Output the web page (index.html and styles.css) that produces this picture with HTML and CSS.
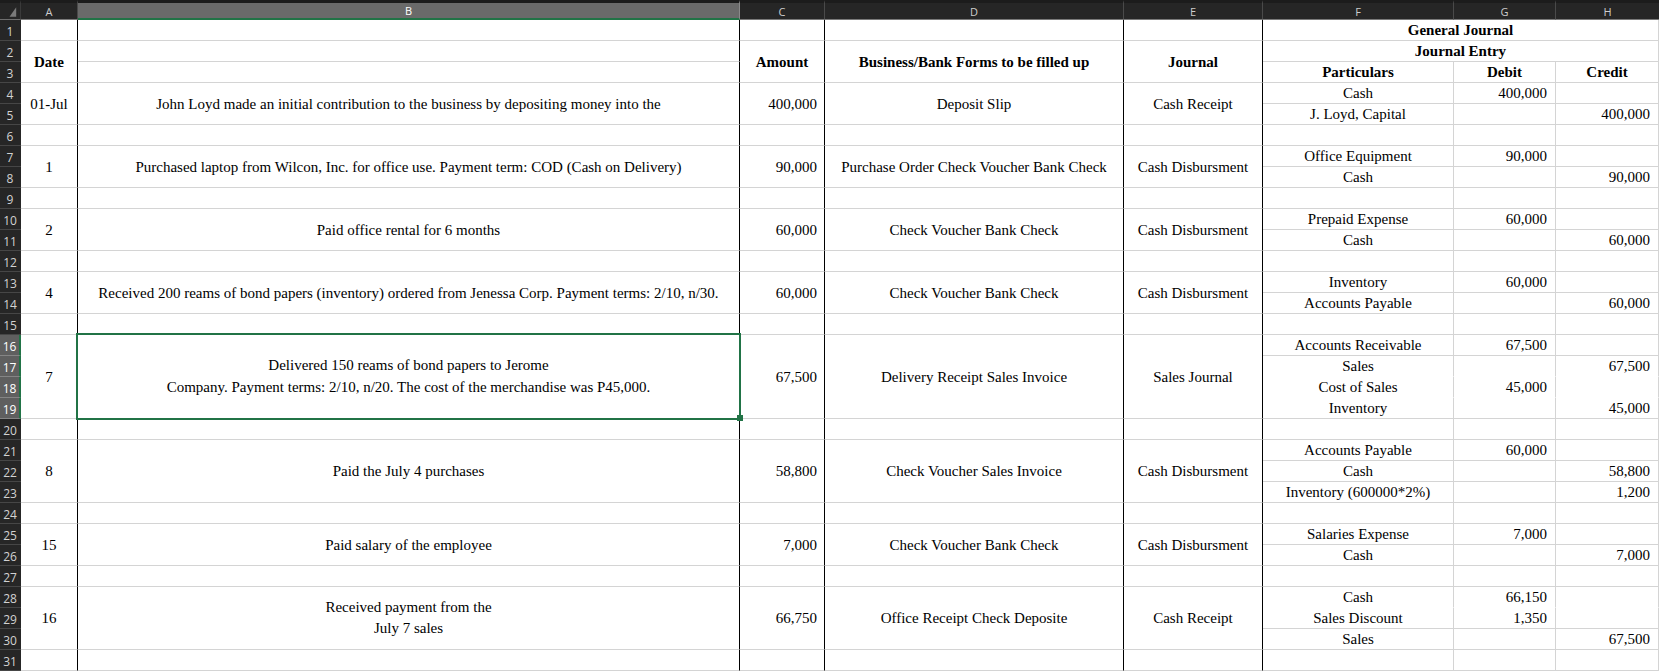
FILE: index.html
```html
<!DOCTYPE html>
<html>
<head>
<meta charset="utf-8">
<link rel="stylesheet" href="styles.css">
</head>
<body>
<div class="sheet">
  <div class="corner"><svg width="21" height="17" viewBox="0 0 21 17"><polygon points="17,4 17,14 10,14" fill="#7a7a7a"/></svg></div>
  <div class="ch">A</div>
  <div class="ch sel">B</div>
  <div class="ch">C</div>
  <div class="ch">D</div>
  <div class="ch">E</div>
  <div class="ch">F</div>
  <div class="ch">G</div>
  <div class="ch last">H</div>

  <!-- row 1 -->
  <div class="rh">1</div>
  <div class="c ca"></div><div class="c cb"></div><div class="c cc"></div><div class="c cd"></div><div class="c ce"></div>
  <div class="c cf s3 b">General Journal</div>

  <!-- row 2-3 -->
  <div class="rh">2</div>
  <div class="c ca r2 b">Date</div>
  <div class="c cb"></div>
  <div class="c cc r2 b ctr">Amount</div>
  <div class="c cd r2 b">Business/Bank Forms to be filled up</div>
  <div class="c ce r2 b">Journal</div>
  <div class="c cf s3 b">Journal Entry</div>
  <div class="rh">3</div>
  <div class="c cb"></div>
  <div class="c cf b">Particulars</div>
  <div class="c cg b ctr">Debit</div>
  <div class="c cx b ctr">Credit</div>

  <!-- 01-Jul -->
  <div class="rh">4</div>
  <div class="c ca r2">01-Jul</div>
  <div class="c cb r2">John Loyd made an initial contribution to the business by depositing money into the</div>
  <div class="c cc r2">400,000</div>
  <div class="c cd r2">Deposit Slip</div>
  <div class="c ce r2">Cash Receipt</div>
  <div class="c cf">Cash</div><div class="c cg">400,000</div><div class="c cx"></div>
  <div class="rh">5</div>
  <div class="c cf">J. Loyd, Capital</div><div class="c cg"></div><div class="c cx">400,000</div>
  <div class="rh">6</div>
  <div class="c ca"></div><div class="c cb"></div><div class="c cc"></div><div class="c cd"></div><div class="c ce"></div><div class="c cf"></div><div class="c cg"></div><div class="c cx"></div>

  <!-- 1 -->
  <div class="rh">7</div>
  <div class="c ca r2">1</div>
  <div class="c cb r2">Purchased laptop from Wilcon, Inc. for office use. Payment term: COD (Cash on Delivery)</div>
  <div class="c cc r2">90,000</div>
  <div class="c cd r2">Purchase Order Check Voucher Bank Check</div>
  <div class="c ce r2">Cash Disbursment</div>
  <div class="c cf">Office Equipment</div><div class="c cg">90,000</div><div class="c cx"></div>
  <div class="rh">8</div>
  <div class="c cf">Cash</div><div class="c cg"></div><div class="c cx">90,000</div>
  <div class="rh">9</div>
  <div class="c ca"></div><div class="c cb"></div><div class="c cc"></div><div class="c cd"></div><div class="c ce"></div><div class="c cf"></div><div class="c cg"></div><div class="c cx"></div>

  <!-- 2 -->
  <div class="rh">10</div>
  <div class="c ca r2">2</div>
  <div class="c cb r2">Paid office rental for 6 months</div>
  <div class="c cc r2">60,000</div>
  <div class="c cd r2">Check Voucher Bank Check</div>
  <div class="c ce r2">Cash Disbursment</div>
  <div class="c cf">Prepaid Expense</div><div class="c cg">60,000</div><div class="c cx"></div>
  <div class="rh">11</div>
  <div class="c cf">Cash</div><div class="c cg"></div><div class="c cx">60,000</div>
  <div class="rh">12</div>
  <div class="c ca"></div><div class="c cb"></div><div class="c cc"></div><div class="c cd"></div><div class="c ce"></div><div class="c cf"></div><div class="c cg"></div><div class="c cx"></div>

  <!-- 4 -->
  <div class="rh">13</div>
  <div class="c ca r2">4</div>
  <div class="c cb r2">Received 200 reams of bond papers (inventory) ordered from Jenessa Corp. Payment terms: 2/10, n/30.</div>
  <div class="c cc r2">60,000</div>
  <div class="c cd r2">Check Voucher Bank Check</div>
  <div class="c ce r2">Cash Disbursment</div>
  <div class="c cf">Inventory</div><div class="c cg">60,000</div><div class="c cx"></div>
  <div class="rh">14</div>
  <div class="c cf">Accounts Payable</div><div class="c cg"></div><div class="c cx">60,000</div>
  <div class="rh">15</div>
  <div class="c ca"></div><div class="c cb"></div><div class="c cc"></div><div class="c cd"></div><div class="c ce"></div><div class="c cf"></div><div class="c cg"></div><div class="c cx"></div>

  <!-- 7 -->
  <div class="rh sel">16</div>
  <div class="c ca r4">7</div>
  <div class="c cb r4 wrap selbox">Delivered 150 reams of bond papers to Jerome<br>Company. Payment terms: 2/10, n/20. The cost of the merchandise was P45,000.</div>
  <div class="c cc r4">67,500</div>
  <div class="c cd r4">Delivery Receipt Sales Invoice</div>
  <div class="c ce r4">Sales Journal</div>
  <div class="c cf">Accounts Receivable</div><div class="c cg">67,500</div><div class="c cx"></div>
  <div class="rh sel">17</div>
  <div class="c cf nb">Sales</div><div class="c cg nb"></div><div class="c cx nb">67,500</div>
  <div class="rh sel">18</div>
  <div class="c cf nb">Cost of Sales</div><div class="c cg nb">45,000</div><div class="c cx nb"></div>
  <div class="rh sel">19</div>
  <div class="c cf">Inventory</div><div class="c cg"></div><div class="c cx">45,000</div>
  <div class="rh">20</div>
  <div class="c ca"></div><div class="c cb"></div><div class="c cc"></div><div class="c cd"></div><div class="c ce"></div><div class="c cf"></div><div class="c cg"></div><div class="c cx"></div>

  <!-- 8 -->
  <div class="rh">21</div>
  <div class="c ca r3">8</div>
  <div class="c cb r3">Paid the July 4 purchases</div>
  <div class="c cc r3">58,800</div>
  <div class="c cd r3">Check Voucher Sales Invoice</div>
  <div class="c ce r3">Cash Disbursment</div>
  <div class="c cf">Accounts Payable</div><div class="c cg">60,000</div><div class="c cx"></div>
  <div class="rh">22</div>
  <div class="c cf">Cash</div><div class="c cg"></div><div class="c cx">58,800</div>
  <div class="rh">23</div>
  <div class="c cf">Inventory (600000*2%)</div><div class="c cg"></div><div class="c cx">1,200</div>
  <div class="rh">24</div>
  <div class="c ca"></div><div class="c cb"></div><div class="c cc"></div><div class="c cd"></div><div class="c ce"></div><div class="c cf"></div><div class="c cg"></div><div class="c cx"></div>

  <!-- 15 -->
  <div class="rh">25</div>
  <div class="c ca r2">15</div>
  <div class="c cb r2">Paid salary of the employee</div>
  <div class="c cc r2">7,000</div>
  <div class="c cd r2">Check Voucher Bank Check</div>
  <div class="c ce r2">Cash Disbursment</div>
  <div class="c cf">Salaries Expense</div><div class="c cg">7,000</div><div class="c cx"></div>
  <div class="rh">26</div>
  <div class="c cf">Cash</div><div class="c cg"></div><div class="c cx">7,000</div>
  <div class="rh">27</div>
  <div class="c ca"></div><div class="c cb"></div><div class="c cc"></div><div class="c cd"></div><div class="c ce"></div><div class="c cf"></div><div class="c cg"></div><div class="c cx"></div>

  <!-- 16 -->
  <div class="rh">28</div>
  <div class="c ca r3">16</div>
  <div class="c cb r3 wrap">Received payment from the<br>July 7 sales</div>
  <div class="c cc r3">66,750</div>
  <div class="c cd r3">Office Receipt Check Deposite</div>
  <div class="c ce r3">Cash Receipt</div>
  <div class="c cf nb">Cash</div><div class="c cg nb">66,150</div><div class="c cx nb"></div>
  <div class="rh">29</div>
  <div class="c cf">Sales Discount</div><div class="c cg">1,350</div><div class="c cx"></div>
  <div class="rh">30</div>
  <div class="c cf">Sales</div><div class="c cg"></div><div class="c cx">67,500</div>
  <div class="rh">31</div>
  <div class="c ca"></div><div class="c cb"></div><div class="c cc"></div><div class="c cd"></div><div class="c ce"></div><div class="c cf"></div><div class="c cg"></div><div class="c cx"></div>
</div>
</body>
</html>
```

FILE: styles.css
```css
html, body {
  margin: 0;
  padding: 0;
  background: #ffffff;
}

body {
  font-family: "Liberation Serif", "Times New Roman", serif;
  font-size: 15px;
  color: #000000;
  overflow: hidden;
}

.sheet {
  display: grid;
  grid-template-columns: 21px 57px 662px 85px 299px 139px 191px 102px 103px;
  grid-template-rows: 20px repeat(31, 21px);
  width: 1659px;
  height: 671px;
  overflow: hidden;
  background: #ffffff;
}

/* header chrome */
.corner {
  box-sizing: border-box;
  background: #262626;
  border-top: 3px solid #1c1c1c;
  border-bottom: 1px solid #6e6e6e;
  border-right: 1px solid #3a3a3a;
  display: flex;
}

.corner svg {
  display: block;
}

.ch {
  box-sizing: border-box;
  background: #262626;
  border-top: 3px solid #1c1c1c;
  border-bottom: 1px solid #7a7a7a;
  border-right: 1px solid #4a4a4a;
  color: #cdcdcd;
  font-family: "Open Sans", "Noto Sans", sans-serif;
  font-size: 11px;
  display: flex;
  align-items: center;
  justify-content: center;
}

.ch.sel {
  background: #6a6a6a;
  color: #ffffff;
  border-bottom: 2px solid #217346;
  border-right-color: #8a8a8a;
}

.ch.last {
  border-right: none;
}

.rh {
  grid-column: 1;
  box-sizing: border-box;
  background: #262626;
  border-bottom: 1px solid #464646;
  color: #d2d2d2;
  font-family: "Open Sans", "Noto Sans", sans-serif;
  font-size: 12px;
  display: flex;
  align-items: center;
  justify-content: center;
  padding-top: 2px;
  padding-right: 1px;
}

.rh.sel {
  background: #5f5f5f;
  color: #ffffff;
  border-bottom-color: #858585;
  border-right: 2px solid #217346;
  padding-right: 0;
}

/* cells */
.c {
  box-sizing: border-box;
  border-right: 1px solid #d4d4d4;
  border-bottom: 1px solid #d4d4d4;
  display: flex;
  align-items: center;
  justify-content: center;
  white-space: nowrap;
  padding: 1px 2px 0;
  line-height: 19px;
}

.ca, .cb, .cc, .cd, .ce {
  border-right-color: #000000;
}

.cc {
  justify-content: flex-end;
  padding-right: 7px;
}

.cg, .cx {
  justify-content: flex-end;
  padding-right: 8px;
}

.ctr {
  justify-content: center;
  padding-right: 2px;
}

.s3 { grid-column: span 3; }
.r2 { grid-row: span 2; }
.r3 { grid-row: span 3; }
.r4 { grid-row: span 4; }

.b { font-weight: bold; }

.nb { border-bottom-color: #ffffff; }

.wrap {
  white-space: normal;
  text-align: center;
  line-height: 21.5px;
  padding-top: 0;
}

/* active cell outline (overlay) */
.selbox {
  position: relative;
  z-index: 2;
}

.selbox::after {
  content: "";
  position: absolute;
  top: -2px;
  left: -2px;
  right: -2px;
  bottom: -2px;
  border: 2px solid #217346;
  pointer-events: none;
}

.selbox::before {
  content: "";
  position: absolute;
  width: 6px;
  height: 6px;
  right: -4px;
  bottom: -3px;
  background: #217346;
  z-index: 1;
}
```
